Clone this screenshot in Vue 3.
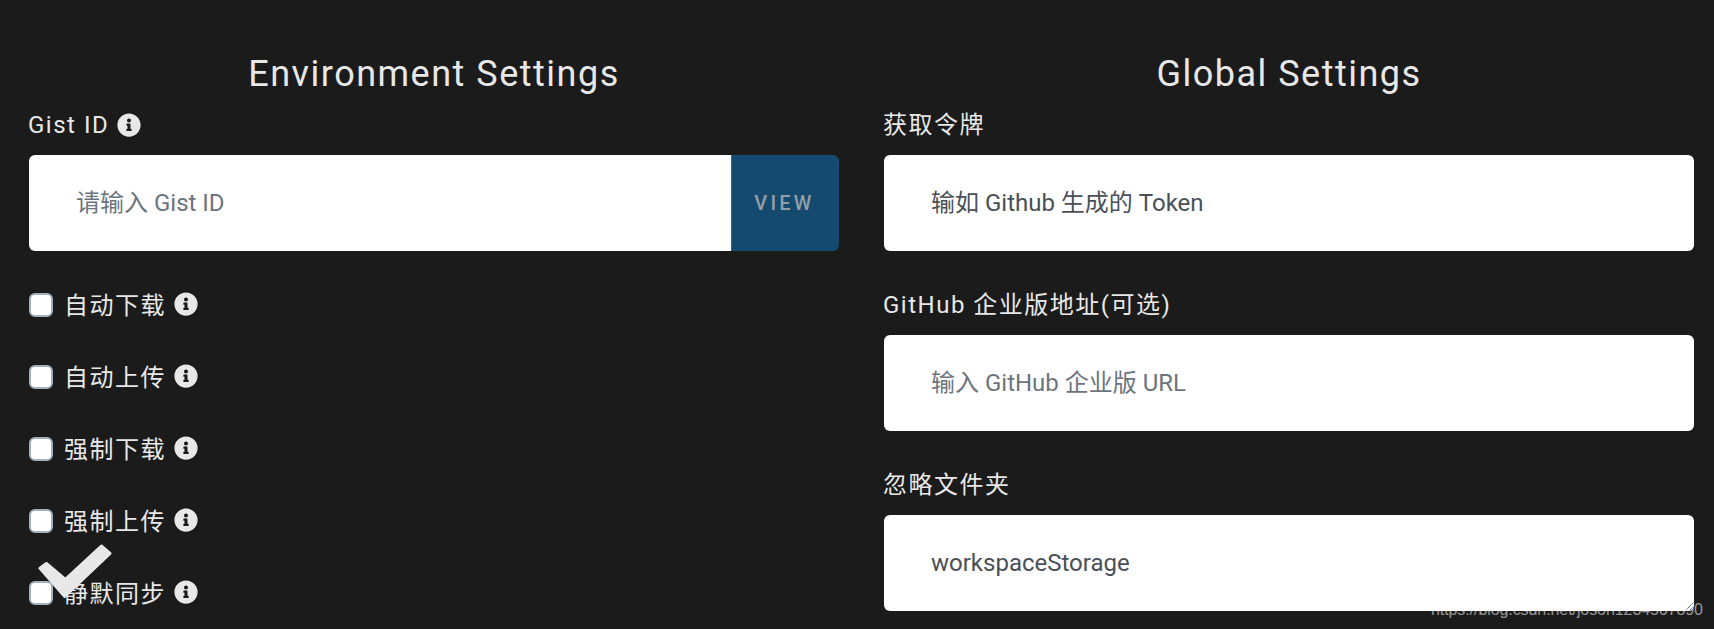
<script setup>
const toggles = ['自动下载', '自动上传', '强制下载', '强制上传', '静默同步']
</script>

<template>
  <main class="page">
    <section class="col">
      <h2 class="title">Environment Settings</h2>
      <div class="field">
        <label class="label">Gist ID <svg class="info" viewBox="0 0 512 512"><path d="M256 8C119 8 8 119 8 256c0 137 111 248 248 248s248-111 248-248C504 119 393 8 256 8zm0 110c23.200 0 42 18.800 42 42s-18.800 42-42 42-42-18.800-42-42 18.800-42 42-42zm56 254c0 6.600-5.400 12-12 12h-88c-6.600 0-12-5.400-12-12v-24c0-6.600 5.400-12 12-12h12v-64h-12c-6.600 0-12-5.400-12-12v-24c0-6.600 5.400-12 12-12h64c6.600 0 12 5.400 12 12v100h12c6.600 0 12 5.400 12 12v24z"/></svg></label>
        <div class="group">
          <input class="control" placeholder="请输入 Gist ID" />
          <button class="view">VIEW</button>
        </div>
      </div>
      <div class="toggles">
        <label v-for="t in toggles" :key="t" class="toggle">
          <input type="checkbox" class="box" />
          <span class="toggle-text">{{ t }}</span>
          <svg class="info" viewBox="0 0 512 512"><path d="M256 8C119 8 8 119 8 256c0 137 111 248 248 248s248-111 248-248C504 119 393 8 256 8zm0 110c23.200 0 42 18.800 42 42s-18.800 42-42 42-42-18.800-42-42 18.800-42 42-42zm56 254c0 6.600-5.400 12-12 12h-88c-6.600 0-12-5.400-12-12v-24c0-6.600 5.400-12 12-12h12v-64h-12c-6.600 0-12-5.400-12-12v-24c0-6.600 5.400-12 12-12h64c6.600 0 12 5.400 12 12v100h12c6.600 0 12 5.400 12 12v24z"/></svg>
        </label>
      </div>
    </section>

    <section class="col">
      <h2 class="title">Global Settings</h2>
      <div class="field">
        <label class="label">获取令牌</label>
        <input class="control solo token" value="输如 Github 生成的 Token" />
      </div>
      <div class="field">
        <label class="label">GitHub 企业版地址(可选)</label>
        <input class="control solo" placeholder="输入 GitHub 企业版 URL" />
      </div>
      <div class="field">
        <label class="label">忽略文件夹</label>
        <textarea class="control solo area">workspaceStorage</textarea>
      </div>
    </section>

    <svg class="check" viewBox="0 0 74 55"><polygon points="2,24.300 8.400,19.500 27.400,35.300 63.400,2 72,9.300 26.700,52.500" fill="#e8e8e8" stroke="#e8e8e8" stroke-width="3" stroke-linejoin="round"/></svg>
    <span class="mark">https://blog.csdn.net/joson1234567890</span>
  </main>
</template>

<style>
html, body { margin: 0; background: #1b1b1b; overflow: hidden; }
</style>

<style scoped>
.page {
  position: relative;
  height: 629px;
  overflow: hidden;
  box-sizing: border-box;
  display: grid;
  grid-template-columns: 810px 810px;
  column-gap: 45px;
  padding: 0 21px 0 29px;
  background: #1b1b1b;
  color: #e8e8e8;
  font-family: Roboto, "Noto Sans CJK SC", sans-serif;
}
.col { min-width: 0; }
.title {
  margin: 0;
  height: 111px;
  padding-top: 51px;
  box-sizing: border-box;
  text-align: center;
  font-size: 36px;
  font-weight: 400;
  line-height: 46px;
  letter-spacing: 1.5px;
}
.label {
  display: flex;
  align-items: center;
  gap: 8px;
  margin-left: -1px;
  padding-bottom: 16px;
  height: 28px;
  font-size: 24px;
  line-height: 28px;
  letter-spacing: 1.5px;
}
.field + .field .label { padding-top: 40px; }
.info { width: 24px; height: 24px; fill: #e8e8e8; flex: none; }
.group {
  display: flex;
  height: 96px;
  border-radius: 6px;
  overflow: hidden;
}
.control {
  flex: 1;
  min-width: 0;
  height: 96px;
  box-sizing: border-box;
  border: 0;
  outline: 0;
  padding: 0 48px 0 47px;
  background: #fff;
  color: #495057;
  font-family: Roboto, "Noto Sans CJK SC", sans-serif;
  font-size: 24px;
  line-height: 32px;
}
.control::placeholder { color: #6c757d; opacity: 1; }
.solo { display: block; width: 100%; border-radius: 6px; }
.token { padding-bottom: 6px; }
.area { padding: 32px 48px 0 47px; }
.view {
  width: 108px;
  flex: none;
  border: 0;
  border-left: 1px solid #2c6a94;
  background: #144a70;
  color: #939ea7;
  font-family: Roboto, sans-serif;
  font-size: 20px;
  font-weight: 500;
  letter-spacing: 3.2px;
  padding: 0 2px 0 0;
}
.toggles { padding-top: 17px; }
.toggle {
  display: flex;
  align-items: center;
  height: 72px;
  font-size: 24px;
}
.box {
  appearance: none;
  width: 24px;
  height: 24px;
  margin: 2px 11px 0 0;
  box-sizing: border-box;
  flex: none;
  background: #fff;
  border: 2px solid #a3b1bd;
  border-radius: 6px;
}
.toggle-text { margin-right: 8px; padding-bottom: 2px; letter-spacing: 1.5px; }
.check {
  position: absolute;
  left: 38px;
  top: 544px;
  width: 74px;
  height: 55px;
}
.mark {
  position: absolute;
  left: 1431px;
  top: 600px;
  font-family: "Liberation Sans", Arial, sans-serif;
  font-size: 16px;
  letter-spacing: -0.08px;
  line-height: 20px;
  color: rgba(255, 255, 255, 0.55);
  white-space: nowrap;
}
</style>
